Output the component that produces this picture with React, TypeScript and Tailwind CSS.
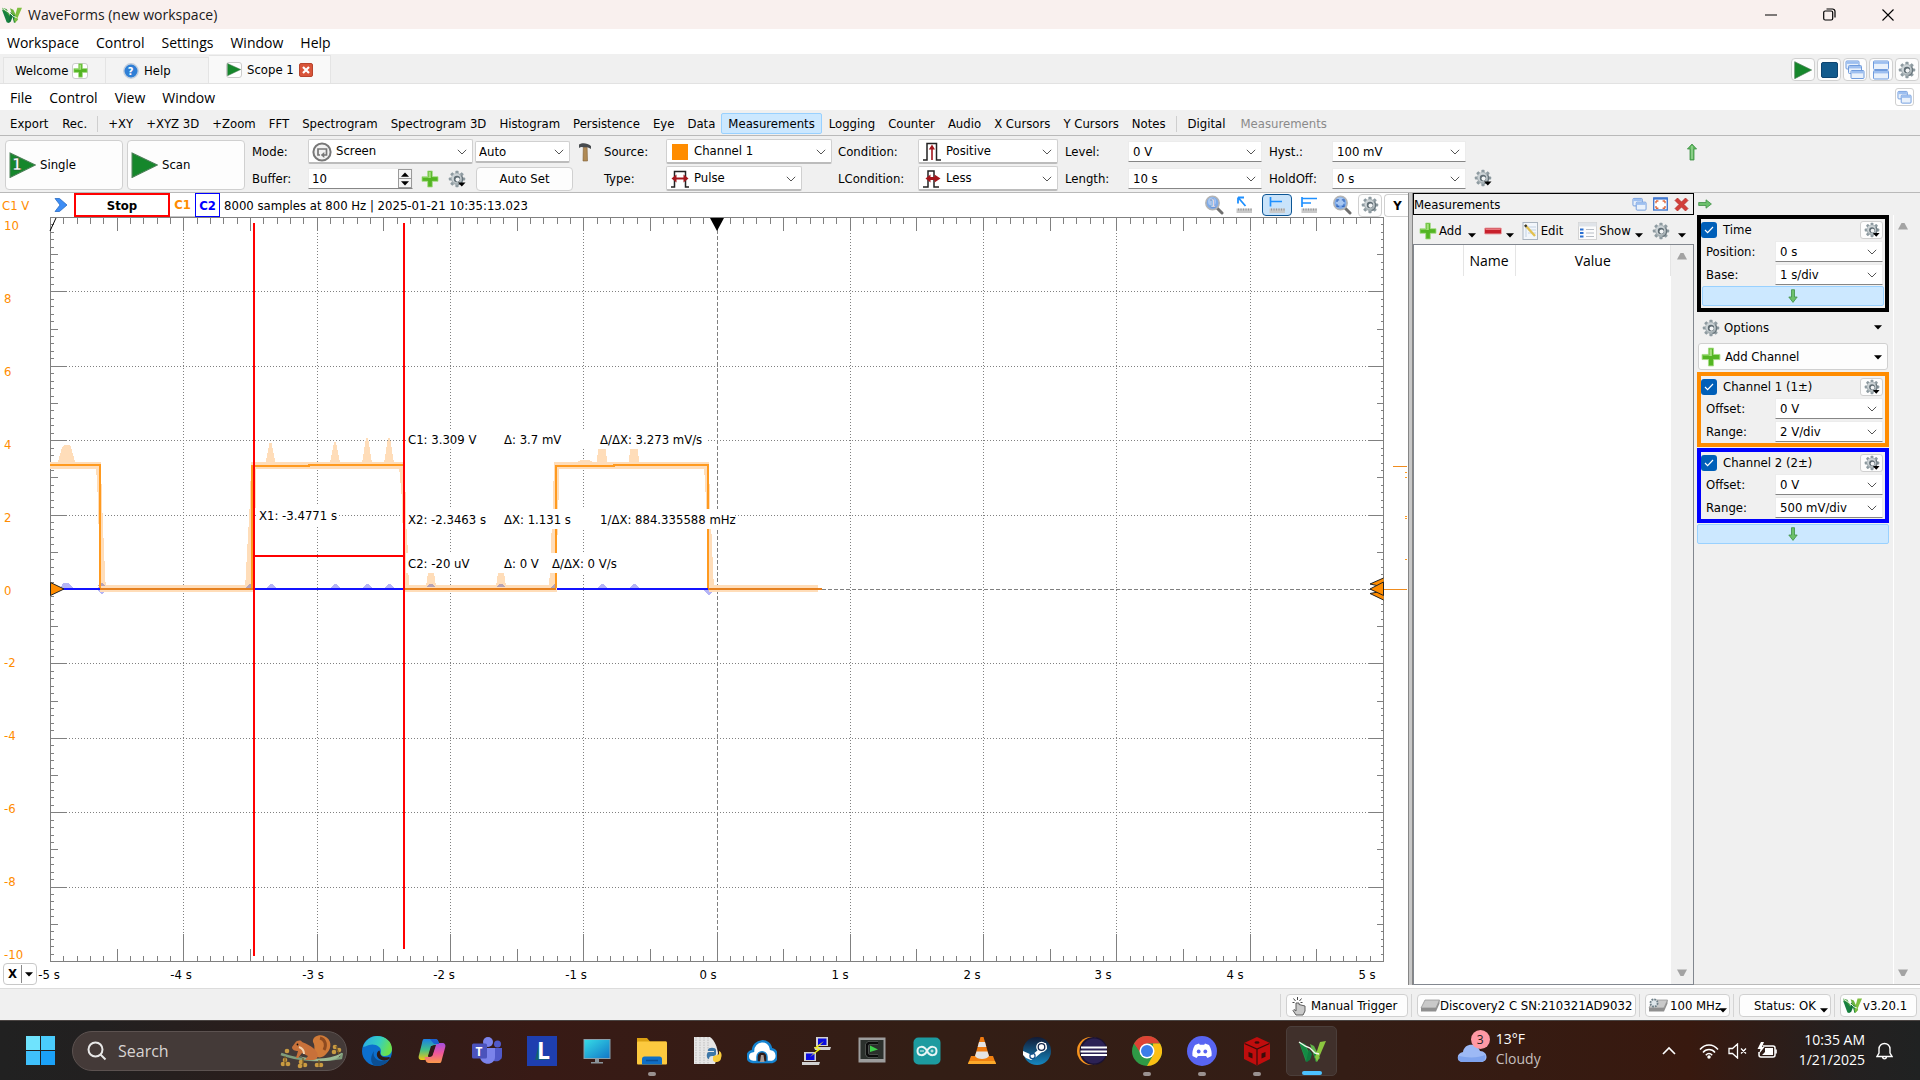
import type { ReactNode } from 'react';

const UI = 'font-["DejaVu_Sans_Condensed","DejaVu_Sans",sans-serif] text-[13px]';
const SEGOE = 'font-["Open_Sans","Noto_Sans",sans-serif] text-[14px]';

/* ---------- icons ---------- */

const TEETH = [0, 45, 90, 135, 180, 225, 270, 315];

function Gear({ caret = false, size = 18 }: { caret?: boolean; size?: number }) {
  return (
    <svg width={size} height={size} viewBox="0 0 18 18" className="shrink-0">
      <g>
        {TEETH.map((a) => (
          <rect key={a} x="7.4" y="0.8" width="3.2" height="4" rx="0.8" fill="#8d9aa0" transform={`rotate(${a} 9 9)`} />
        ))}
        <circle cx="9" cy="9" r="5.9" fill="#a7b1b5" />
        <circle cx="8.4" cy="8.2" r="4.6" fill="#ccd3d6" />
        <circle cx="9" cy="9" r="3.2" fill="#5f6c73" />
        <circle cx="9.6" cy="9.6" r="2.1" fill="#f2f4f5" />
        <path d="M13.5 5.5a5.8 5.8 0 0 1-3 9.2" stroke="#66737a" strokeWidth="1.2" fill="none" />
      </g>
      {caret && <path d="M10 12.5h7.5l-3.7 4z" fill="#000" />}
    </svg>
  );
}

function Plus({ size = 18 }: { size?: number }) {
  return (
    <svg width={size} height={size} viewBox="0 0 18 18" className="shrink-0">
      <path d="M6.7 1h4.6v5.7H17v4.6h-5.7V17H6.7v-5.7H1V6.7h5.7z" fill="#53b522" stroke="#a5dc84" strokeWidth="0.8" />
      <path d="M7.6 2h2.2v6H2V7.6h5.6z" fill="#a4e07c" />
    </svg>
  );
}

function Play({ w, h, one = false }: { w: number; h: number; one?: boolean }) {
  return (
    <svg width={w} height={h} viewBox="0 0 26 26" preserveAspectRatio="none" className="shrink-0">
      <path d="M1 1L25.5 13L1 25.5z" fill="#15872b" stroke="#4d7f58" strokeWidth="1" />
      {one && (
        <text x="3" y="18" fontSize="15" fontWeight="700" fill="#fff" stroke="#2b4a31" strokeWidth="0.5" className='font-["DejaVu_Sans_Condensed",sans-serif]'>
          1
        </text>
      )}
    </svg>
  );
}

function WLogo({ size = 20 }: { size?: number }) {
  return (
    <svg width={size} height={size} viewBox="0 0 30 30" className="shrink-0">
      <polygon points="0,4 7,6 13,17 9,27" fill="#4da545" />
      <polygon points="0,7 6,10 14,20 10,27 7,26" fill="#17803f" />
      <polygon points="10,27 13,25 17,15 13,10" fill="#0f6f38" />
      <polygon points="12,5 17,7 24,22 19,27" fill="#6db33f" />
      <polygon points="15,14 20,16 21,24 18,27" fill="#17803f" />
      <polygon points="18,22 20,27 30,4 23,4" fill="#7fbf3f" />
      <polyline points="1,5 7,9 12,12 17,17 22,19" fill="none" stroke="#eef5ea" strokeWidth="1.5" />
    </svg>
  );
}

function Arrow({ dir }: { dir: 'up' | 'down' | 'right' }) {
  const deg = dir === 'up' ? 0 : dir === 'down' ? 180 : 90;
  return (
    <svg width="18" height="18" viewBox="0 0 18 18" className="shrink-0">
      <path d="M9 1l4.6 5H11v11H7V6H4.4z" fill="#5cb85c" stroke="#3f8f45" strokeWidth="0.8" transform={`rotate(${deg} 9 9)`} />
      <path d="M9 3v13" stroke="#a6dba2" strokeWidth="1.2" transform={`rotate(${deg} 9 9)`} />
    </svg>
  );
}

function SmallArrow({ dir }: { dir: 'down' | 'right' }) {
  return (
    <svg width="14" height="14" viewBox="0 0 14 14" className="shrink-0">
      <path d="M0.7 5.5H8V2.8L13.4 7 8 11.2V8.5H0.7z" fill="#6cc06c" stroke="#3f8f45" strokeWidth="0.8" transform={dir === 'down' ? 'rotate(90 7 7)' : undefined} />
    </svg>
  );
}

function Win({ x, y, w, h }: { x: number; y: number; w: number; h: number }) {
  return (
    <g>
      <rect x={x} y={y} width={w} height={h} rx="1" fill="#e9f1fb" stroke="#6f9bdd" strokeWidth="1" />
      <rect x={x + 0.5} y={y + 0.5} width={w - 1} height="2.4" fill="#9dbff0" />
    </g>
  );
}

const Cascade2 = ({ size = 16 }: { size?: number }) => (
  <svg width={size} height={size} viewBox="0 0 16 16">
    <Win x={1} y={1.5} w={10} h={8} />
    <Win x={4.5} y={5.5} w={10.5} h={8.5} />
  </svg>
);

const Cascade3 = () => (
  <svg width="20" height="20" viewBox="0 0 20 20">
    <Win x={1} y={1} w={13} h={8} />
    <Win x={3.5} y={5.5} w={13} h={8} />
    <Win x={6} y={10.5} w={13} h={8} />
  </svg>
);

const Tile = () => (
  <svg width="18" height="20" viewBox="0 0 18 20">
    <Win x={1.5} y={1} w={15} h={8.5} />
    <Win x={1.5} y={10.5} w={15} h={8.5} />
  </svg>
);

const MaxIcon = () => (
  <svg width="15" height="14" viewBox="0 0 15 14">
    <rect x="0.7" y="1" width="13.6" height="12" fill="#fff" stroke="#4379cf" strokeWidth="1.4" />
    <path d="M0.7 1.6h13.6" stroke="#4379cf" strokeWidth="2" />
    <path d="M3 4l2.4 0M3 4v2.2M12 4H9.6M12 4v2.2M3 11.2h2.4M3 11.2V9M12 11.2H9.6M12 11.2V9" stroke="#e0683c" strokeWidth="1.4" />
  </svg>
);

const RedX = () => (
  <svg width="15" height="15" viewBox="0 0 15 15">
    <path d="M3.5 1L7.5 5 11.5 1 14 3.5 10 7.5l4 4-2.5 2.5-4-4-4 4L1 11.5l4-4-4-4z" fill="#d23f3a" stroke="#b32b27" strokeWidth="0.7" />
  </svg>
);

const Chevron = () => (
  <svg width="10" height="6" viewBox="0 0 10 6" className="pointer-events-none absolute right-[6px] top-1/2 -translate-y-1/2">
    <path d="M0.8 0.8L5 5 9.2 0.8" fill="none" stroke="#555" strokeWidth="1" />
  </svg>
);

const Caret = ({ className = '' }: { className?: string }) => (
  <svg width="8" height="5" viewBox="0 0 8 5" className={className}>
    <path d="M0 0.3h8L4 4.6z" fill="#000" />
  </svg>
);

const PulseIcon = ({ kind }: { kind: 'pos' | 'pulse' | 'less' }) => (
  <svg width="20" height="20" viewBox="0 0 20 20">
    <path
      d={kind === 'pulse' ? 'M1 18h3.5V2.5h11V18H19' : kind === 'pos' ? 'M1 18h4V1.5h9.5V18H19' : 'M1 18h5V2h6v16h5'}
      fill="none"
      stroke="#222"
      strokeWidth="1.5"
    />
    {kind === 'pos' && <path d="M9.2 18V7.5H6.8L10 2.5l3 5h-2.2V18z" fill="#a3161c" />}
    {kind === 'pulse' && <path d="M1.5 9.5l5-4v3h7v-3l5 4-5 4v-3h-7v3z" fill="#a3161c" />}
    {kind === 'less' && <path d="M3.5 9.5l5-4v2.5h4V5.5l6 4-6 4V11h-4v2.5z" fill="#a3161c" />}
  </svg>
);

const ScreenIcon = () => (
  <svg width="20" height="20" viewBox="0 0 20 20">
    <circle cx="10" cy="10" r="8.6" fill="#f2f2f2" stroke="#777" strokeWidth="2" />
    <path d="M8 13H6V7h8.5v6H11.5" fill="none" stroke="#777" strokeWidth="1.7" />
    <path d="M12.3 10v6L8.8 13z" fill="#777" />
  </svg>
);

const Hammer = () => (
  <svg width="14" height="20" viewBox="0 0 14 20" className="shrink-0">
    <path d="M1 2.5C4 0.5 9 0.5 13 4v3c-2-1.5-3-1.5-4-1.5H5C4 4.8 2.5 5 1 6z" fill="#474b4e" />
    <path d="M5.3 5.5h3.8L9.5 19H5z" fill="#b08a55" stroke="#7f6036" strokeWidth="0.6" />
  </svg>
);

function Magnifier({ mark }: { mark: string }) {
  return (
    <svg width="20" height="20" viewBox="0 0 20 20">
      <path d="M12.5 12.5L18 18" stroke="#6f6f6f" strokeWidth="3" strokeLinecap="round" />
      <circle cx="8.5" cy="8" r="6.7" fill="#7fabe8" stroke="#b4b4b4" strokeWidth="1.5" />
      <circle cx="8" cy="6.5" r="4" fill="#a9c8f2" />
      {mark ? (
        <text x="5.7" y="12" fontSize="10" fontWeight="700" fill="#fff" stroke="#3b66ad" strokeWidth="0.4">
          {mark}
        </text>
      ) : (
        <path d="M5 7V4.8h2.200M12 7V4.800H9.800M5 9.200v2.200h2.200M12 9.200v2.200H9.800" stroke="#3a6cc0" strokeWidth="1.3" fill="none" />
      )}
    </svg>
  );
}

function CursorIcon({ kind }: { kind: 'arrow' | 'one' | 'two' }) {
  return (
    <svg width="18" height="18" viewBox="0 0 18 18">
      {kind === 'arrow' && <path d="M3 1.5v6M3 1.5h6M3.5 2l7 8" stroke="#1e90ff" strokeWidth="1.8" fill="none" />}
      {kind === 'one' && <path d="M2.5 1v9.5M2.5 5.5H14" stroke="#1e90ff" strokeWidth="1.7" fill="none" />}
      {kind === 'two' && <path d="M2 1v10M2 2.5h15M2 7h9" stroke="#1e90ff" strokeWidth="1.7" fill="none" />}
      <rect x="1.5" y="12.5" width="15.5" height="4.5" fill="#c9c9c9" />
      <path d="M3.5 12.5v2M6 12.5v2M8.5 12.5v2M11 12.5v2M13.5 12.5v2M16 12.5v2" stroke="#8a8a8a" strokeWidth="0.8" />
    </svg>
  );
}

/* ---------- controls ---------- */

function Combo({ label, value, w, h = 'h-[21px]', raised = false, icon }: { label: string; value: string; w: string; h?: string; raised?: boolean; icon?: ReactNode }) {
  return (
    <div className={`relative shrink-0 ${w}`}>
      <select
        aria-label={label}
        defaultValue={value}
        className={`block w-full appearance-none bg-white pr-6 text-black outline-none ${h} ${icon ? 'pl-[27px]' : raised ? 'pl-[3px]' : 'pl-[4px]'} ${
          raised ? 'rounded-[2px] border border-b-2 border-[#d0d0d0] border-b-[#bcbcbc] bg-[#fdfdfd]' : 'border border-[#ececec] border-b-[#868686]'
        }`}
      >
        <option>{value}</option>
      </select>
      {icon && <span className="pointer-events-none absolute left-[4px] top-1/2 -translate-y-1/2">{icon}</span>}
      <Chevron />
    </div>
  );
}

function IconButton({ label, w, children }: { label: string; w: string; children: ReactNode }) {
  return (
    <button aria-label={label} className={`flex h-[23px] items-center justify-center rounded-[4px] border border-[#d0d0d0] bg-[#fdfdfd] ${w}`}>
      {children}
    </button>
  );
}

const Rows = ({ children, className = '' }: { children: ReactNode; className?: string }) => (
  <div className={`grid shrink-0 grid-rows-[27px_27px] items-center ${className}`}>{children}</div>
);

/* ---------- page parts ---------- */

function TitleBar() {
  return (
    <header className={`flex h-[29px] shrink-0 items-center bg-[#f9f0ee] pl-[2px] ${SEGOE}`}>
      <WLogo size={20} />
      <h1 className="ml-[6px] text-[#1a1a1a]">WaveForms (new workspace)</h1>
      <div className="ml-auto flex items-center">
        <button aria-label="Minimize" className="flex h-7 w-[58px] items-center justify-center">
          <svg width="12" height="12" viewBox="0 0 12 12"><path d="M0 6h12" stroke="#000" /></svg>
        </button>
        <button aria-label="Restore" className="flex h-7 w-[58px] items-center justify-center">
          <svg width="13" height="13" viewBox="0 0 13 13" fill="none" stroke="#000" strokeWidth="1.2">
            <rect x="0.7" y="3" width="9" height="9" rx="1.5" />
            <path d="M3.5 1h6a2.5 2.5 0 0 1 2.5 2.5v6" />
          </svg>
        </button>
        <button aria-label="Close" className="flex h-7 w-[62px] items-center justify-center pr-[2px]">
          <svg width="12" height="12" viewBox="0 0 12 12"><path d="M0.5 0.5l11 11M11.5 0.5l-11 11" stroke="#000" strokeWidth="1.1" /></svg>
        </button>
      </div>
    </header>
  );
}

function Menu({ items, className }: { items: string[]; className: string }) {
  return (
    <nav className={`flex items-center gap-[17px] ${SEGOE} ${className}`}>
      {items.map((t) => (
        <button key={t}>{t}</button>
      ))}
    </nav>
  );
}

function TabBar() {
  return (
    <div className={`flex h-[30px] shrink-0 items-end border-b border-[#e2e2e2] bg-[#f0f0f0] pl-[3px] ${UI}`}>
      <button className="flex h-[26px] w-[103px] items-center gap-1 border border-b-0 border-[#e4e4e4] bg-[#f3f3f3] pl-[11px]">
        Welcome
        <span className="flex h-4 w-4 items-center justify-center rounded-[3px] border border-[#ccc] bg-white"><Plus size={15} /></span>
      </button>
      <button className="flex h-[26px] w-[103px] items-center gap-[5px] border border-b-0 border-l-0 border-[#e4e4e4] bg-[#f3f3f3] pl-[17px]">
        <svg width="16" height="16" viewBox="0 0 16 16">
          <circle cx="8" cy="8" r="7.2" fill="#2f7fd6" stroke="#c3cfdd" strokeWidth="1.4" />
          <text x="4.7" y="12" fontSize="11" fontWeight="700" fill="#fff">?</text>
        </svg>
        Help
      </button>
      <button className="flex h-[28px] w-[122px] items-center gap-[5px] border border-b-0 border-l-0 border-[#e4e4e4] bg-[#f9f9f9] pl-[17px]">
        <span className="flex h-4 w-4 items-center justify-center rounded-[3px] border border-[#ccc] bg-white"><Play w={14} h={13} /></span>
        Scope 1
        <svg width="14" height="14" viewBox="0 0 14 14">
          <rect x="0.5" y="0.5" width="13" height="13" rx="1.5" fill="#d9553a" stroke="#b8452e" />
          <path d="M4 4l6 6M10 4l-6 6" stroke="#fff" strokeWidth="2.2" />
        </svg>
      </button>
      <div className="mb-[2px] ml-auto flex gap-[2px] pr-[1px]">
        <IconButton label="Run all" w="w-[24px]"><Play w={18} h={18} /></IconButton>
        <IconButton label="Stop all" w="w-[24px]"><span className="h-[16px] w-[17px] rounded-[2px] border border-[#0d4470] bg-[#125a8c]" /></IconButton>
        <IconButton label="Cascade" w="w-[24px]"><Cascade3 /></IconButton>
        <IconButton label="Tile" w="w-[24px]"><Tile /></IconButton>
        <IconButton label="Settings" w="w-[24px]"><Gear /></IconButton>
      </div>
    </div>
  );
}

const TOOLS = ['+XY', '+XYZ 3D', '+Zoom', 'FFT', 'Spectrogram', 'Spectrogram 3D', 'Histogram', 'Persistence', 'Eye', 'Data', 'Measurements', 'Logging', 'Counter', 'Audio', 'X Cursors', 'Y Cursors', 'Notes'];

function ToolBar() {
  return (
    <div className={`flex h-[26px] shrink-0 items-center border-b border-[#b9b9b9] bg-[#f0f0f0] pl-[3px] pt-[2px] ${UI}`}>
      <button className="px-[7px]">Export</button>
      <button className="px-[7px]">Rec.</button>
      <span className="mx-[3px] h-4 w-px bg-[#cfcfcf]" />
      {TOOLS.map((t) =>
        t === 'Measurements' ? (
          <button key={t} className="h-[21px] rounded-[2px] border border-[#99d1ff] bg-[#cce8ff] px-[6px]">{t}</button>
        ) : (
          <button key={t} className="pl-[7px] pr-[6px]">{t}</button>
        ),
      )}
      <span className="mx-[4px] h-4 w-px bg-[#cfcfcf]" />
      <button className="px-[7px]">Digital</button>
      <button className="px-[8px] text-[#8a8a8a]" disabled>Measurements</button>
    </div>
  );
}

function ControlPanel() {
  return (
    <div className={`flex h-[57px] shrink-0 items-start border-b border-[#b9b9b9] bg-[#f0f0f0] pl-[5px] pt-[2px] ${UI}`}>
      <div className="mt-[2px] flex gap-1">
        <button className="flex h-[50px] w-[118px] items-center gap-1 rounded-[4px] border border-[#d0d0d0] bg-[#fdfdfd] pl-[3px]">
          <Play w={27} h={26} one />
          Single
        </button>
        <button className="flex h-[50px] w-[118px] items-center gap-1 rounded-[4px] border border-[#d0d0d0] bg-[#fdfdfd] pl-[3px]">
          <Play w={27} h={26} />
          Scan
        </button>
      </div>
      <Rows className="ml-[7px] w-[56px]">
        <span>Mode:</span>
        <label htmlFor="buffer">Buffer:</label>
      </Rows>
      <Rows>
        <div className="flex items-center gap-[2px]">
          <Combo label="Mode" value="Screen" w="w-[165px]" h="h-[25px]" raised icon={<ScreenIcon />} />
          <Combo label="Trigger mode" value="Auto" w="w-[95px]" h="h-[22px]" raised />
          <span className="ml-[6px]"><Hammer /></span>
        </div>
        <div className="flex items-center">
          <div className="relative w-[105px]">
            <input id="buffer" defaultValue="10" className="h-[21px] w-full border border-[#ececec] border-b-[#868686] bg-white pl-[3px] outline-none" />
            <span className="absolute right-[1px] top-[1px] flex h-[19px] w-[14px] flex-col border border-[#9a9a9a] bg-[#f4f4f4]">
              <span className="flex h-[9px] items-center justify-center border-b border-[#9a9a9a]"><Caret className="rotate-180" /></span>
              <span className="flex h-[8px] items-center justify-center"><Caret /></span>
            </span>
          </div>
          <button aria-label="Add buffer" className="ml-[8px]"><Plus /></button>
          <button aria-label="Buffer options" className="ml-[9px]"><Gear caret /></button>
          <button className="ml-[10px] h-[24px] w-[97px] rounded-[4px] border border-[#d0d0d0] bg-[#fdfdfd]">Auto Set</button>
        </div>
      </Rows>
      <Rows className="ml-[12px] w-[62px]">
        <span>Source:</span>
        <span>Type:</span>
      </Rows>
      <Rows>
        <Combo label="Source" value="Channel 1" w="w-[166px]" h="h-[25px]" raised icon={<span className="ml-[2px] block h-4 w-4 bg-[#ff8c00]" />} />
        <Combo label="Type" value="Pulse" w="w-[136px]" h="h-[25px]" raised icon={<PulseIcon kind="pulse" />} />
      </Rows>
      <Rows className="ml-[6px] w-[80px]">
        <span>Condition:</span>
        <span>LCondition:</span>
      </Rows>
      <Rows>
        <Combo label="Condition" value="Positive" w="w-[140px]" h="h-[25px]" raised icon={<PulseIcon kind="pos" />} />
        <Combo label="LCondition" value="Less" w="w-[140px]" h="h-[25px]" raised icon={<PulseIcon kind="less" />} />
      </Rows>
      <Rows className="ml-[7px] w-[63px]">
        <span>Level:</span>
        <span>Length:</span>
      </Rows>
      <Rows>
        <Combo label="Level" value="0 V" w="w-[134px]" />
        <Combo label="Length" value="10 s" w="w-[134px]" />
      </Rows>
      <Rows className="ml-[7px] w-[63px]">
        <span>Hyst.:</span>
        <span>HoldOff:</span>
      </Rows>
      <Rows>
        <Combo label="Hysteresis" value="100 mV" w="w-[134px]" />
        <Combo label="HoldOff" value="0 s" w="w-[134px]" />
      </Rows>
      <div className="ml-[8px] mt-[31px]"><Gear caret /></div>
      <div className="ml-auto mr-[219px] mt-[5px]"><Arrow dir="up" /></div>
    </div>
  );
}

function ScopeHeader() {
  return (
    <div className={`flex h-[24px] shrink-0 items-center bg-white pl-[2px] ${UI}`}>
      <span className="w-[52px] pt-[2px] text-[#ff8c00]">C1 V</span>
      <svg width="14" height="16" viewBox="0 0 14 16"><path d="M1 1.5h4.5L13 8l-7.500 6.500H1L6 8z" fill="#3d8df5" stroke="#2a6cc4" strokeWidth="0.8" /></svg>
      <button className="ml-[6px] h-[24px] w-[96px] border-2 border-[#f00] pt-px font-bold">Stop</button>
      <button className="h-[24px] w-[25px] border-b border-[#c4c4c4] pt-px font-bold text-[#ff8c00]">C1</button>
      <button className="h-[24px] w-[25px] border border-[#00f] pt-px font-bold text-[#00f]">C2</button>
      <span className="ml-1 pt-[2px]">8000 samples at 800 Hz | 2025-01-21 10:35:13.023</span>
      <div className="ml-auto flex items-center">
        <button aria-label="Zoom 1:1" className="w-[31px]"><Magnifier mark="1" /></button>
        <button aria-label="Normal cursor" className="w-[27px]"><CursorIcon kind="arrow" /></button>
        <button aria-label="One cursor" className="flex h-[22px] w-[30px] items-center justify-center rounded-[4px] border border-[#0b5594] bg-[#c9e3fa]"><CursorIcon kind="one" /></button>
        <button aria-label="Two cursors" className="ml-[8px] w-[32px]"><CursorIcon kind="two" /></button>
        <button aria-label="Zoom fit" className="w-[26px]"><Magnifier mark="" /></button>
        <IconButton label="Plot options" w="w-[24px]"><Gear /></IconButton>
        <button className="ml-[2px] h-[23px] w-[24px] rounded-l-[4px] border border-r-0 border-[#d0d0d0] pl-[2px] pt-px font-bold">Y</button>
      </div>
    </div>
  );
}

const L = 50.5;
const R = 1383.5;
const T = 217.5;
const B = 961.5;
const PX = (R - L) / 100;
const PY = (B - T) / 100;

function Ticks() {
  const out: ReactNode[] = [];
  for (let i = 1; i < 100; i++) {
    const x = Math.floor(L + i * PX) + 0.5;
    const y = Math.floor(T + i * PY) + 0.5;
    const v = i % 10 === 0 ? 28 : i % 5 === 0 ? 13 : 6;
    const h = i % 10 === 0 ? 15 : i % 5 === 0 ? 7 : 3;
    out.push(<path key={i} d={`M${x} ${T}v${i % 10 === 0 ? 13 : v}M${x} ${B}v${-v}M${L} ${y}h${h}M${R} ${y}h${-h}`} />);
  }
  return <g stroke="#808080" fill="none">{out}</g>;
}

function Grid() {
  const n = [1, 2, 3, 4, 5, 6, 7, 8, 9];
  return (
    <g stroke="#808080" fill="none">
      {n.map((i) => {
        const x = Math.floor(L + i * 10 * PX) + 0.5;
        const y = Math.floor(T + i * 10 * PY) + 0.5;
        const dash = i === 5 ? '4 2' : '1 2';
        return <path key={i} strokeDasharray={dash} d={`M${x} 230V934M66 ${y}H1369`} />;
      })}
    </g>
  );
}

const BUMPS = [[270.5, 443], [335, 442], [367, 438], [389, 438]];
const Y_LABELS = ['10', '8', '6', '4', '2', '0', '-2', '-4', '-6', '-8', '-10'];
const X_LABELS = ['-5 s', '-4 s', '-3 s', '-2 s', '-1 s', '0 s', '1 s', '2 s', '3 s', '4 s', '5 s'];
const NOTES: [number, number, string, number][] = [
  [408, 439, 'C1: 3.309 V', 96],
  [504, 439, 'Δ: 3.7 mV', 96],
  [600, 439, 'Δ/ΔX: 3.273 mV/s', 108],
  [408, 519, 'X2: -2.3463 s', 96],
  [504, 519, 'ΔX: 1.131 s', 96],
  [600, 519, '1/ΔX: 884.335588 mHz', 137],
  [408, 563, 'C2: -20 uV', 96],
  [504, 563, 'Δ: 0 V', 50],
  [552, 563, 'Δ/ΔX: 0 V/s', 72],
  [259, 515, 'X1: -3.4771 s', 80],
];

function Plot() {
  return (
    <svg viewBox="0 217 1408 771" preserveAspectRatio="xMinYMin meet" className={`block h-full w-full ${UI}`} shapeRendering="crispEdges">
      <Grid />
      <Ticks />
      <rect x={L} y={T} width={R - L} height={B - T} fill="none" stroke="#808080" />

      {/* noise envelope of channel 2 */}
      <g fill="#b4b4f6">
        <path d="M60 589l3-6h6l5 6zM96 589l6-5 5 5-5 6zM244 589l6-7 4 7z" />
        {[271, 335, 367, 389, 602, 634].map((x) => (
          <path key={x} d={`M${x - 5} 588l4-4h2l4 4z`} />
        ))}
        <path d="M703 590h12l-6 5z" />
      </g>
      <path d="M50 589H100M253 589H404M557 589H709" stroke="#1414ff" strokeWidth="2" />

      {/* noise envelope of channel 1 */}
      <g fill="#ffddb9">
        <path d="M50 462H101V469H50zM252 462H404V469H252zM554 462H709V469H554z" />
        <path d="M58 462l4-15 2-2h5l2 2 4 15z" />
        {BUMPS.map(([x, y]) => (
          <path key={x} d={`M${x - 5} 463L${x - 1} ${y}h2L${x + 5} 463z`} />
        ))}
        <path d="M577 462l4-2h8l4 2zM597 462l1-13h8l1 13zM629 462l1-13h8l1 13z" />
        <path d="M96 466h5l1 34 2 50 2 42h-6l-2-92z" />
        <path d="M245 589l5-89 1-38h5v20l-2 107z" />
        <path d="M399 466h5l2 34 3 90h-5l-2-90z" />
        <path d="M549 589l4-89 1-38h5v20l-3 107z" />
        <path d="M704 466h5l1 34 4 90h-6l-2-90z" />
        <path d="M101 585H253V592H101zM404 585H557V592H404zM709 585H818V592H709z" />
        <path d="M426 586l2-13h6l2 13zM496 586l2-13h6l2 13z" />
      </g>
      <g fill="#b6a3b8">
        <path d="M245 588l5-5 3 5zM426 587l4-3h2l4 3zM496 587l4-3h2l4 3zM551 588l4-5 2 5zM97 586l5-3 4 3z" />
      </g>

      <path d="M50 465H100V588M252 588V466H309V465H404M556 588V466H614V465H708V588" fill="none" stroke="#ff9a1f" strokeWidth="2" />
      <path d="M100 589H253M404 589H556M708 589H822" stroke="#e5801f" strokeWidth="2" />

      {NOTES.map(([x, y, , w]) => (
        <rect key={`${x}-${y}`} x={x - 2} y={y - 10} width={w} height="20" fill="#fff" />
      ))}

      <path d="M254 223V956M404 223V949M254 556H404" stroke="#f00" strokeWidth="2" />

      {/* markers */}
      <g shapeRendering="auto">
        <path d="M710 218h14l-7 13z" fill="#000" />
        <path d="M50 231l6-13" stroke="#000" />
        <path d="M50.5 582.5L64 589l-13.5 6.5z" fill="#ff8c00" stroke="#222" />
        <path d="M1383.5 578l-13.5 6 13.5 3M1383.5 600l-13.5-6.5 13.5-2.5" fill="#ff8c00" stroke="#222" />
        <path d="M1383.5 582L1370 589l13.5 6.5z" fill="#ff8c00" stroke="#222" />
      </g>
      <path d="M1384 589.5H1407M1393 466.5H1407" stroke="#f08c1e" />
      <path d="M1405 472.5h2M1405 477.5h2M1405 516.5h2M1405 518.5h2M1405 559.5h2" stroke="#ff9a1f" />

      <g fill="#000">
        {NOTES.map(([x, y, t]) => (
          <text key={t} x={x} y={y + 5}>{t}</text>
        ))}
        {X_LABELS.map((t, i) => (
          <text key={t} x={Math.round(49 + i * 131.8)} y="979" textAnchor="middle">{t}</text>
        ))}
      </g>
      <g fill="#ff8c00">
        {Y_LABELS.map((t, i) => (
          <text key={t} x="4" y={230 + Math.round(i * 72.9)}>{t}</text>
        ))}
      </g>
    </svg>
  );
}

function MeasurementsDock() {
  return (
    <section className={`flex w-[281px] shrink-0 flex-col bg-[#f0f0f0] ${UI}`}>
      <div className="flex h-[22px] items-center border border-black pr-[4px]">
        <h2 className="pt-px">Measurements</h2>
        <div className="ml-auto flex items-center gap-[6px]">
          <button aria-label="Float"><Cascade2 size={15} /></button>
          <button aria-label="Maximize"><MaxIcon /></button>
          <button aria-label="Close panel"><RedX /></button>
        </div>
      </div>
      <div className="flex h-[29px] items-center pl-[6px] pt-[2px]">
        <button className="flex items-center gap-[2px]"><Plus />Add<Caret className="ml-[4px] mt-[10px]" /></button>
        <button aria-label="Remove" className="ml-[8px] flex items-center">
          <svg width="18" height="8" viewBox="0 0 18 8"><rect x="0.5" y="1" width="17" height="6" rx="1" fill="#c8202c" stroke="#e9a7ab" /><path d="M1.5 2.5h15" stroke="#e8767c" /></svg>
          <Caret className="ml-[4px] mt-[10px]" />
        </button>
        <button className="ml-[8px] flex items-center gap-[2px]">
          <svg width="17" height="18" viewBox="0 0 17 18"><rect x="1" y="0.5" width="14.5" height="17" fill="#f2f6fb" stroke="#aab4bf" /><path d="M4 3v12M6 5h8M6 8h8M6 11h8" stroke="#c3d2e3" /><path d="M3 3l10 11" stroke="#e3c14f" strokeWidth="2.4" /><path d="M3 3l1.5 1.700" stroke="#333" strokeWidth="2.4" /></svg>
          Edit
        </button>
        <button className="ml-[15px] flex items-center gap-[2px]">
          <svg width="19" height="18" viewBox="0 0 19 18"><rect x="0.5" y="0.5" width="18" height="17" fill="#fcfcfc" stroke="#d3d3d3" /><rect x="0.5" y="0.5" width="18" height="4" fill="#dfe3e8" /><path d="M2 7.5h3.500M2 11h3.500M2 14.500h3.500" stroke="#2a6fd0" strokeWidth="2" /><path d="M8 7.500h8M8 11h8M8 14.500h8" stroke="#b8bec6" strokeWidth="1.2" /></svg>
          Show
          <Caret className="ml-[2px] mt-[10px]" />
        </button>
        <button aria-label="Measurement options" className="ml-[9px] flex items-center"><Gear /><Caret className="ml-[8px] mt-[10px]" /></button>
      </div>
      <div className="flex flex-1 border border-[#82878f] bg-white">
        <div className="flex-1">
          <table className={`w-full table-fixed ${SEGOE}`}>
            <thead>
              <tr className="h-[31px]">
                <th className="w-[49px] border-r border-[#e5e5e5]" aria-label="Index" />
                <th className="w-[52px] border-r border-[#e5e5e5] font-normal">Name</th>
                <th className="border-r border-[#e5e5e5] font-normal">Value</th>
              </tr>
            </thead>
          </table>
        </div>
        <ScrollBar className="w-[22px]" />
      </div>
    </section>
  );
}

function ScrollBar({ className }: { className: string }) {
  return (
    <div className={`flex flex-col items-center justify-between bg-[#f0f0f0] py-[7px] ${className}`}>
      <svg width="10" height="8" viewBox="0 0 10 8"><path d="M3.5 1h3L10 7.500H0z" fill="#a3a3a3" /></svg>
      <svg width="10" height="8" viewBox="0 0 10 8"><path d="M0 0.5h10L6.500 7h-3z" fill="#a3a3a3" /></svg>
    </div>
  );
}

function Block({ title, color, rows, children }: { title: string; color: string; rows: [string, string][]; children?: ReactNode }) {
  return (
    <section className={`border-4 ${color}`}>
      <div className="flex h-[21px] items-center">
        <label className="flex items-center gap-[6px]">
          <span className="relative flex h-4 w-4">
            <input type="checkbox" defaultChecked className="h-4 w-4 appearance-none rounded-[3px] bg-[#005fb8]" />
            <svg width="10" height="8" viewBox="0 0 10 8" className="pointer-events-none absolute left-[3px] top-[4px]"><path d="M1 4l2.6 2.6L9 1" stroke="#fff" fill="none" strokeWidth="1.2" /></svg>
          </span>
          {title}
        </label>
        <button aria-label={`${title} options`} className="ml-auto mr-[2px] flex h-[18px] w-[23px] items-center justify-center rounded-[3px] border border-[#d0d0d0] bg-[#fdfdfd]"><Gear caret size={16} /></button>
      </div>
      {rows.map(([k, v]) => (
        <div key={k} className="flex h-[23px] items-center pl-[5px] pr-[2px]">
          <span className="flex-1">{k}</span>
          <Combo label={`${title} ${k}`} value={v} w="w-[108px]" />
        </div>
      ))}
      {children}
    </section>
  );
}

const DownButton = ({ className = '', label }: { className?: string; label: string }) => (
  <button aria-label={label} className={`flex h-[20px] items-center justify-center rounded-[2px] border border-[#99d1ff] bg-[#cce8ff] ${className}`}>
    <SmallArrow dir="down" />
  </button>
);

function ChannelPanel() {
  return (
    <aside className={`flex w-[226px] shrink-0 flex-col border-b border-[#b9b9b9] bg-[#f0f0f0] ${UI}`}>
      <div className="flex h-[22px] items-center pl-[4px]"><SmallArrow dir="right" /></div>
      <div className="flex flex-1">
        <div className="flex w-[195px] flex-col pl-[3px]">
          <Block title="Time" color="border-black" rows={[['Position:', '0 s'], ['Base:', '1 s/div']]}>
            <DownButton label="More time settings" className="mx-[1px] mb-[2px] w-[182px]" />
          </Block>
          <button className="flex h-[31px] items-center gap-[4px] pl-[5px] pr-[7px]"><Gear />Options<Caret className="ml-auto" /></button>
          <button className="mx-[1px] mb-[2px] flex h-[27px] items-center gap-[4px] rounded-[3px] border border-[#d0d0d0] bg-[#fdfdfd] pl-[2px] pr-[5px] pt-px"><Plus size={20} />Add Channel<Caret className="ml-auto" /></button>
          <Block title="Channel 1 (1±)" color="border-[#ff8c00]" rows={[['Offset:', '0 V'], ['Range:', '2 V/div']]} />
          <div className="h-px" />
          <Block title="Channel 2 (2±)" color="border-[#00f]" rows={[['Offset:', '0 V'], ['Range:', '500 mV/div']]} />
          <DownButton label="More channels" className="mt-[1px]" />
        </div>
        <div className="ml-[4px] w-px bg-white" />
        <ScrollBar className="w-[18px]" />
      </div>
    </aside>
  );
}

function StatusButton({ children, className = '' }: { children: ReactNode; className?: string }) {
  return (
    <div className="flex items-center border-l border-[#d4d4d4] pl-[5px] pr-[3px]">
      <button className={`relative flex h-[23px] items-center whitespace-nowrap rounded-[4px] border border-[#d0d0d0] bg-[#fdfdfd] ${className}`}>{children}</button>
    </div>
  );
}

const Device = ({ gear = false }: { gear?: boolean }) => (
  <svg width="20" height="16" viewBox="0 0 20 16" className="shrink-0">
    <path d="M5 2h14.5L16 10H1z" fill="#c9c9c9" stroke="#8d8d8d" strokeWidth="0.7" />
    <path d="M1 10h15v3.5H1zM16 10l3.5-8v3.5L16 13.5z" fill="#8f8f8f" />
    {gear && <circle cx="6" cy="5" r="3.6" fill="#dfe6ea" stroke="#6e7f88" strokeWidth="1.8" strokeDasharray="1.8 1" />}
  </svg>
);

function StatusBar() {
  return (
    <footer className={`flex h-[32px] shrink-0 items-stretch justify-end border-t border-[#dcdcdc] bg-[#f0f0f0] pb-[3px] pt-[5px] ${UI}`}>
      <StatusButton className="w-[122px] gap-[5px] pl-[5px]">
        <svg width="14" height="20" viewBox="0 0 14 20"><path d="M4 7v8l-2-1.5-1 1 3 4.5h7l2-4v-5l-6-1.5V7z" fill="#c9c9c9" stroke="#5d5d5d" /><path d="M5.5 1v3M1.5 2.5L3.500 5M9.500 2.500L7.500 5M0.500 6.500h2M8.500 6.500h2" stroke="#444" /></svg>
        Manual Trigger
      </StatusButton>
      <StatusButton className="w-[219px] pl-[2px]"><Device />Discovery2 C SN:210321AD9032</StatusButton>
      <StatusButton className="w-[85px] gap-[2px] pl-[2px]"><Device gear />100 MHz<Caret className="absolute bottom-[3px] right-[2px]" /></StatusButton>
      <StatusButton className="w-[92px] pl-[14px]">Status: OK<Caret className="absolute bottom-[3px] right-[2px]" /></StatusButton>
      <StatusButton className="w-[77px] gap-[1px] pl-[2px]"><WLogo size={19} />v3.20.1</StatusButton>
    </footer>
  );
}

/* ---------- taskbar ---------- */

const Squirrel = () => (
  <svg width="64" height="36" viewBox="0 0 64 36">
    <path d="M2 20c16 6 40 8 60 4l1-5" stroke="#7f9d7c" strokeWidth="2.5" fill="none" />
    <path d="M20 22c14 4 30 4 43-3-3 6-10 8-20 8s-18-2-23-5z" fill="#9dbb95" />
    <path d="M36 22c-2-5 1-9-2-14C33 3 40 0 45 2c8 3 8 12 3 17-3 4-7 6-12 3z" fill="#d07a38" />
    <path d="M41 4c5 1 7 7 4 12" stroke="#8e4a20" strokeWidth="3" fill="none" />
    <path d="M16 9c2-3 6-3 7-1 5 2 10 4 14 9 3 4 2 9-3 9h-8l3-4-6-3-4 5h-2l2-7c-3 0-6-1-6-4z" fill="#c8713a" />
    <path d="M20 13c3 1 5 4 5 7" stroke="#f1d2b0" strokeWidth="2" fill="none" />
    <circle cx="18.5" cy="10.5" r="0.9" fill="#111" />
    <g fill="#c99b42">
      {[[6, 26], [9, 30], [4, 30], [8, 17], [22, 28], [26, 31], [21, 32], [38, 31], [42, 31], [56, 13], [60, 16], [55, 18]].map(([x, y]) => (
        <circle key={`${x},${y}`} cx={x} cy={y} r="2.3" />
      ))}
    </g>
    <path d="M6 22v10M24 24v9M40 26v6M57 12l3 8" stroke="#7a5a22" strokeWidth="1.2" />
  </svg>
);

type TaskIcon = { name: string; dot?: boolean; active?: boolean; art: ReactNode };

const TASKS: TaskIcon[] = [
  {
    name: 'Edge',
    art: (
      <>
        <defs>
          <linearGradient id="eg1" x1="0" y1="0" x2="1" y2="0.3"><stop offset="0" stopColor="#2aa7e8" /><stop offset="0.6" stopColor="#35cfc0" /><stop offset="1" stopColor="#6be04f" /></linearGradient>
        </defs>
        <circle cx="15" cy="15" r="15" fill="#0c6fce" />
        <path d="M1 11C3 4 9 0 15 0c9 0 15 6 15 13 0 4-3 7-7 7-4 0-5-2-4-4 1-5-6-9-12-7-3 1-5 2-6 2z" fill="url(#eg1)" />
        <path d="M12 15c-2 7 4 12 15 9-3 4-7 6-12 6C9 30 7 22 12 15z" fill="#0b4f94" />
        <path d="M18 16c0 5 5 6 9 5 1 0 1 1 .5 2-4 2.5-10 1.5-12-2-1.5-3 0-6 2-6.5z" fill="#2f1b18" />
      </>
    ),
  },
  {
    name: 'Copilot',
    art: (
      <>
        <defs>
          <linearGradient id="cp1" x1="0" y1="0" x2="0" y2="1"><stop offset="0" stopColor="#1b7fe6" /><stop offset="0.5" stopColor="#3fbf8a" /><stop offset="1" stopColor="#f3c613" /></linearGradient>
          <linearGradient id="cp2" x1="0" y1="0" x2="0" y2="1"><stop offset="0" stopColor="#a34fe0" /><stop offset="0.5" stopColor="#f0569c" /><stop offset="1" stopColor="#fb9a4a" /></linearGradient>
        </defs>
        <path d="M7 3h11c2 0 3 1 3.5 3l1 3h-5c-2 0-3 1-3.5 3l-3 9c-.7 2-1.5 3-4 3H5c-3 0-4-2-3-5l3-12c.5-2.5 1-4 2-4z" fill="url(#cp1)" />
        <path d="M23 27H12c-2 0-3-1-3.5-3l-1-3h5c2 0 3-1 3.5-3l3-9c.7-2 1.5-2 4-2h2c3 0 4 2 3 5l-3 11c-.5 2.5-1 4-2 4z" fill="url(#cp2)" />
        <path d="M14 10h4l-3 10h-4z" fill="#2f1b18" />
        <path d="M13 3h5c2 0 3 1 3.5 3l.5 2h-5z" fill="#1b5fd0" />
      </>
    ),
  },
  {
    name: 'Teams',
    art: (
      <>
        <circle cx="16" cy="6" r="5" fill="#7b83eb" /><circle cx="25.5" cy="8" r="3.5" fill="#5059c9" />
        <path d="M20 12h10v8c0 4-4 6-8 5z" fill="#5059c9" />
        <path d="M8 12h15v9c0 9-14 9-15 0z" fill="#7b83eb" />
        <rect x="0" y="7.5" width="15" height="15" rx="1.5" fill="#4b53bc" />
        <text x="3.4" y="19.5" fontSize="12" fontWeight="700" fill="#fff">T</text>
      </>
    ),
  },
  {
    name: 'L',
    art: (<><rect width="30" height="30" fill="#1e3fb0" /><path d="M8 24l4-17v13h10l-1 3.5z" fill="#12606f" /><text x="10" y="23" fontSize="23" fontWeight="700" fill="#fff">L</text></>),
  },
  {
    name: 'Remote desktop',
    art: (
      <>
        <defs><linearGradient id="mn" x1="0" y1="0" x2="1" y2="1"><stop offset="0" stopColor="#35dbe6" /><stop offset="1" stopColor="#1278c8" /></linearGradient></defs>
        <rect x="1.5" y="3" width="27" height="20" fill="#8aa0ac" /><rect x="2.5" y="4" width="25" height="18" fill="url(#mn)" />
        <path d="M13 23h4v3h4v1.5H9V26h4z" fill="#8b949a" />
      </>
    ),
  },
  {
    name: 'File Explorer', dot: true,
    art: (
      <>
        <path d="M0 2h10l3 3.5H29v6H0z" fill="#dba012" />
        <rect y="5.5" width="30" height="23" rx="1" fill="#fcc93f" />
        <path d="M5 28.5V23c0-1.5 1-2.5 2.5-2.5h15c1.5 0 2.5 1 2.5 2.5v5.5z" fill="#0f6fc6" /><path d="M9 24.5h12" stroke="#0b4f96" strokeWidth="1.5" />
      </>
    ),
  },
  {
    name: 'Python file',
    art: (
      <>
        <path d="M2 1h16c5 4 7 10 8 16-1 5-2 8-3 11H2z" fill="#e6e6e6" /><path d="M4 1v27M8 1v27M12 1v27M16 1v27" stroke="#bdbdbd" strokeDasharray="1.5 1" />
        <path d="M16 14c0-3 8-3 8 0v4c0 2-2 2-4 2s-3 1-3 3c-3 0-3-7 0-7h5v-1h-6z" fill="#3d77a8" />
        <path d="M29 22c0 5-8 5-8 2v-3c0-2 5-1 6-3v-3c3 1 3 5 2 7z" fill="#f8cb3c" />
      </>
    ),
  },
  {
    name: 'Cloud tunnel',
    art: (
      <>
        <path d="M6 26c-7-1-7-10 0-11C6 3 23 2 24 13c7 1 8 11 1 13z" fill="#fff" stroke="#1583d0" strokeWidth="2.5" />
        <path d="M10 26v-5c0-7 10-7 10 0v5z" fill="#2f1b18" stroke="#1583d0" strokeWidth="1.5" /><path d="M14 19h2.5l1 7h-4.5z" fill="#a79c97" />
      </>
    ),
  },
  {
    name: 'PuTTY',
    art: (
      <>
        <path d="M14 1h12v9H14zM12 11h17l-1 3H13z" fill="#d2d2d2" /><rect x="16" y="2.5" width="8.5" height="6.5" fill="#0b0be0" />
        <path d="M2 16h12v9H2zM0 26h18l-1 3H0z" fill="#d2d2d2" /><rect x="4" y="17.5" width="8.5" height="6.5" fill="#0b0be0" />
        <path d="M22 5l-10 7 4 1-8 8 11-8-4-1z" fill="#f2f21a" />
      </>
    ),
  },
  {
    name: 'Terminal',
    art: (<><rect x="1.5" y="1.5" width="27" height="25" fill="#9d9d9d" /><rect x="3.5" y="4" width="23" height="19" fill="#2b302c" /><path d="M21 7h-8q-3 0-3 3v7q0 3 3 3h8" stroke="#6b706c" strokeWidth="3.6" fill="none" /><path d="M21 7h-8q-3 0-3 3v7q0 3 3 3h8" stroke="#0c0c0c" strokeWidth="2.4" fill="none" /><path d="M13 9.5l8 4-8 2.5z" fill="#3fd04b" /></>),
  },
  {
    name: 'Arduino',
    art: (<><rect x="1.5" y="1.5" width="27" height="27" rx="5" fill="#1d9ba0" /><path d="M15 15c-3-6-9.5-5-9.5 0s6.5 6 9.5 0c3-6 9.5-5 9.5 0s-6.5 6-9.5 0z" fill="none" stroke="#e9f5f5" strokeWidth="2" /><path d="M8 15h4M18.5 15h3M20 13.5v3" stroke="#e9f5f5" strokeWidth="1" /></>),
  },
  {
    name: 'VLC',
    art: (<><path d="M4 20h22l3 8H1z" fill="#f08010" /><path d="M13.5 1h3l5.5 19c-2 4-12 4-14 0z" fill="#ee7a10" /><path d="M12 6h6l1.3 5h-8.6zM9.5 15.5h11L22 20c-2 4-12 4-14 0z" fill="#e4e4e4" /><path d="M1 28l1-3h26l1 3z" fill="#fca92a" /></>),
  },
  {
    name: 'Steam',
    art: (
      <>
        <defs><linearGradient id="st" x1="0" y1="0" x2="0" y2="1"><stop offset="0" stopColor="#111a35" /><stop offset="1" stopColor="#1587c0" /></linearGradient></defs>
        <circle cx="15" cy="15" r="14" fill="url(#st)" />
        <path d="M1 15l9 4 6-5 2-6 6-1 1 6-5 3-6 5-5 3-5-2-3-3z" fill="#fff" /><circle cx="19.5" cy="11" r="5.3" fill="#fff" /><circle cx="19.5" cy="11" r="3.3" fill="none" stroke="#14284c" strokeWidth="1.3" /><circle cx="10.5" cy="20" r="2.6" fill="none" stroke="#14508a" strokeWidth="1.2" />
      </>
    ),
  },
  {
    name: 'Eclipse',
    art: (<><circle cx="14" cy="15" r="14" fill="#f7941e" /><circle cx="16.5" cy="15" r="14" fill="#1b1333" /><circle cx="17" cy="15" r="12.5" fill="#2c2255" /><path d="M4 11.5h26M3.5 15.500h26.500M4 19h26" stroke="#fff" strokeWidth="2.2" /></>),
  },
  {
    name: 'Chrome', dot: true,
    art: (
      <>
        <circle cx="15" cy="15" r="15" fill="#2f9a46" />
        <path d="M2 7.5A15 15 0 0 1 28 7.500H15l-6 10z" fill="#dd4334" /><path d="M28 7.500A15 15 0 0 1 15 30l6.500-11.500L21 7.500z" fill="#fbbf14" />
        <circle cx="15" cy="15" r="7.5" fill="#fff" /><circle cx="15" cy="15" r="6" fill="#3b7de9" />
      </>
    ),
  },
  {
    name: 'Discord', dot: true,
    art: (<><circle cx="15" cy="15" r="15" fill="#5865f2" /><path d="M8 9l4-1.5.8 1.200h4.400L18 7.500 22 9c2.500 4 3 8 2.500 11l-4 2-1.500-2h-8l-1.500 2-4-2C5 17 5.500 13 8 9z" fill="#fff" /><circle cx="11.7" cy="15.5" r="1.9" fill="#5865f2" /><circle cx="18.3" cy="15.5" r="1.9" fill="#5865f2" /></>),
  },
  {
    name: 'Red cube', dot: true,
    art: (<><path d="M15 1l13 6v16l-13 6.500L2 23V7z" fill="#c00d0d" /><path d="M2.500 7.500L15 13l12.500-5.500M15 13v16" stroke="#3a0d0a" strokeWidth="1.2" fill="none" /><ellipse cx="15" cy="6.5" rx="2.5" ry="1.3" fill="#3a0d0a" /><path d="M6.500 16l4 1.500v5l-4-1.800zM23.500 16l-4 1.500v5l4-1.800z" fill="#3a0d0a" /></>),
  },
  { name: 'WaveForms', active: true, art: <g><polygon points="2,6 8,8 13,18 9,26" fill="#1f9a4b" /><polygon points="3,8 8,11 14,21 10,26" fill="#148a44" /><polygon points="9,26 13,24 15,18 12,13" fill="#0f7a3e" /><polygon points="13,8 17,10 23,22 19,26" fill="#5fb548" /><polygon points="16,15 21,18 21,24 19,26" fill="#148a44" /><polygon points="18,21 20,26 29,5 23,6" fill="#8cc63f" /><polyline points="2,6 8,10 13,12 18,17 22,18" fill="none" stroke="#f3f7ef" strokeWidth="1.4" /></g> },
];

function TaskBar() {
  return (
    <footer className="flex h-[60px] shrink-0 items-center border-t border-[#4a4442] bg-[linear-gradient(90deg,#212121_0%,#222020_5%,#381a15_28%,#331e15_48%,#341d15_70%,#38190f_88%,#242020_96%,#202222_100%)] pl-[26px] text-white font-['Open_Sans','Noto_Sans',sans-serif]">
      <button aria-label="Start" className="grid grid-cols-2 gap-px">
        <span className="h-[14px] w-[14px] bg-[#6fe3fd]" />
        <span className="h-[14px] w-[14px] bg-[#4accfc]" />
        <span className="h-[14px] w-[14px] bg-[#3fc0fb]" />
        <span className="h-[14px] w-[14px] bg-[#1ba1f8]" />
      </button>
      <div className="relative ml-[17px] mr-[2px] flex h-[40px] w-[275px] items-center rounded-full border border-[#5c5250] bg-[#443a38] pl-[14px]">
        <svg width="20" height="20" viewBox="0 0 20 20" fill="none" stroke="#e8e8e8" strokeWidth="2"><circle cx="8.5" cy="8.5" r="7" /><path d="M13.5 13.5L18.500 18.500" /></svg>
        <input aria-label="Search" placeholder="Search" className="ml-[11px] w-[120px] bg-transparent text-[16px] text-white outline-none placeholder:text-[#d8d4d3]" />
        <span className="absolute right-[3px] top-[2px]"><Squirrel /></span>
      </div>
      <div className="flex">
        {TASKS.map((t) => (
          <button key={t.name} aria-label={t.name} className={`relative flex h-[50px] items-center justify-center ${t.active ? 'mx-[2px] w-[51px] rounded-[5px] border border-[#4b3e3a] bg-[#40302b]' : 'w-[55px]'}`}>
            <svg width="30" height="30" viewBox="0 0 30 30" className="font-['Open_Sans',sans-serif]">{t.art}</svg>
            {t.dot && <span className="absolute bottom-0 h-1 w-2 rounded-full bg-[#9a9290]" />}
            {t.active && <span className="absolute bottom-0 h-1 w-5 rounded-full bg-[#4cc2ff]" />}
          </button>
        ))}
      </div>
      <button className="mb-[3px] ml-auto mr-[121px] flex items-center gap-[9px] text-left text-[14px] leading-5">
        <span className="relative">
          <svg width="30" height="38" viewBox="0 0 30 38"><path d="M6 32c-7 0-7-9 0-10 1-9 14-10 17-1 8 0 9 11 1 11z" fill="#9db9f5" /><path d="M6 32c-5 0-6-4-4-6 8 2 20 2 26-1 1 4-1 7-4 7z" fill="#7fa3ee" /></svg>
          <span className="absolute left-[14px] top-0 flex h-[19px] w-[19px] items-center justify-center rounded-full bg-[#ff99a4] text-[12px] text-[#222]">3</span>
        </span>
        <span className="flex flex-col">
          <span>13°F</span>
          <span className="text-[#c5bfbd]">Cloudy</span>
        </span>
      </button>
      <button aria-label="Show hidden icons" className="mr-[23px]">
        <svg width="14" height="9" viewBox="0 0 14 9"><path d="M1 8l6-6 6 6" fill="none" stroke="#fff" strokeWidth="1.6" /></svg>
      </button>
      <button aria-label="Network, volume and battery" className="mr-[22px] flex items-center gap-[9px]">
        <svg width="20" height="16" viewBox="0 0 20 16" fill="none" stroke="#fff" strokeWidth="1.5"><path d="M1 6.5C6 0.5 14 0.5 19 6.500M4 9.500c3-4 9-4 12 0M6.800 12.200c2-2.300 4.400-2.300 6.400 0" /><circle cx="10" cy="14" r="1" fill="#fff" /></svg>
        <svg width="20" height="16" viewBox="0 0 20 16" fill="none" stroke="#fff" strokeWidth="1.3"><path d="M1 5.5h3.500L9.500 1v14L4.500 10.500H1zM13 5.500l5 5M18 5.500l-5 5" /></svg>
        <svg width="20" height="18" viewBox="0 0 20 18"><path d="M6 4h10c1.500 0 2 .8 2 2v7c0 1.500-.8 2-2 2H4c-1 0-2-.5-2-2v-3" fill="none" stroke="#fff" strokeWidth="1.5" /><path d="M8 6h8v7H5l3-3z" fill="#fff" /><path d="M19 7.500v4" stroke="#fff" strokeWidth="1.6" /><path d="M4 0L0.500 7h3L2 12l5.500-7H5L7 0z" fill="#fff" /></svg>
      </button>
      <time dateTime="2025-01-21T10:35" className="mb-[2px] mr-[11px] flex flex-col text-right text-[14px] leading-5">
        <span>10:35 AM</span>
        <span>1/21/2025</span>
      </time>
      <button aria-label="Notifications" className="mr-[27px]">
        <svg width="17" height="20" viewBox="0 0 17 20" fill="none" stroke="#fff" strokeWidth="1.4"><path d="M3 8a5.500 5.500 0 0 1 11 0v4l2 3.500H1L3 12zM6.500 16c.5 2.500 3.500 2.500 4 0" /></svg>
      </button>
    </footer>
  );
}

export default function App() {
  return (
    <div className="flex h-screen flex-col overflow-hidden bg-white text-black">
      <TitleBar />
      <Menu items={['Workspace', 'Control', 'Settings', 'Window', 'Help']} className="h-[25px] shrink-0 pl-[7px] pt-[2px]" />
      <TabBar />
      <div className="flex h-[26px] shrink-0 items-center pr-[6px]">
        <Menu items={['File', 'Control', 'View', 'Window']} className="pl-[10px]" />
        <button aria-label="Undock" className="ml-auto flex h-[18px] w-[19px] items-center justify-center rounded-[3px] border border-[#d0d0d0]"><Cascade2 size={15} /></button>
      </div>
      <ToolBar />
      <ControlPanel />
      <main className="flex min-h-0 flex-1">
        <div className="flex min-w-0 flex-1 flex-col">
          <ScopeHeader />
          <div className="relative min-h-0 flex-1">
            <Plot />
            <button className={`absolute bottom-[3px] left-[3px] flex h-[22px] w-[34px] items-center rounded-[4px] border border-[#c8c8c8] bg-white pl-[4px] font-bold ${UI}`}>
              X<span className="ml-[4px] mr-[3px] h-[18px] w-px bg-[#888]" />
              <Caret />
            </button>
          </div>
        </div>
        <div className="mb-[3px] w-[5px] shrink-0 border-l border-r border-[#868686] bg-[#c8c8c8]" />
        <div className="mb-[3px] flex"><MeasurementsDock /><ChannelPanel /></div>
      </main>
      <StatusBar />
      <TaskBar />
    </div>
  );
}
